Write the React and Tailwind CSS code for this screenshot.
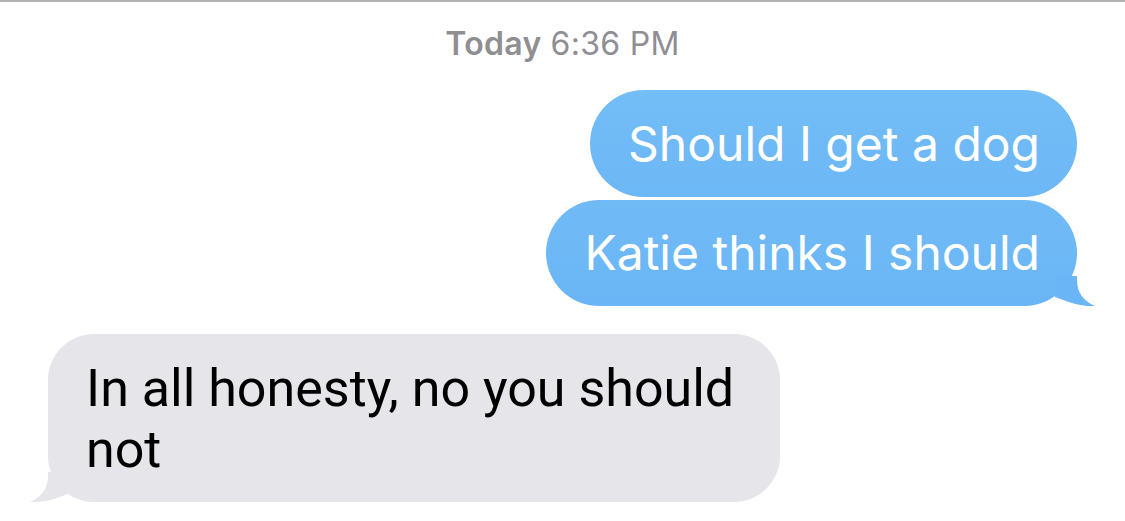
import React from 'react';

// iMessage-style conversation
function BlueTail() {
  return (
    <svg className="absolute right-[-18px] bottom-0" width="40" height="30" viewBox="0 0 40 30">
      <path d="M0 0 H22 V4 C22 16 28 25 40 30 C30 31 18 28 0 21 Z" fill="#6ab5f5" />
    </svg>
  );
}

function GrayTail() {
  return (
    <svg className="absolute left-[-18px] bottom-0" width="44" height="30" viewBox="0 0 44 30">
      <path d="M44 0 H18 V4 C18 16 12 25 0 30 C10 31 24 28 40 21 L44 21 Z" fill="#e5e5ea" />
    </svg>
  );
}

export default function App() {
  return (
    <div className="w-[1125px] h-[521px] bg-white border-t-2 border-[#b2b2b2] overflow-hidden" style={{ fontFamily: 'Inter, Roboto, sans-serif' }}>
      <div className="flex justify-center pt-[22px] text-[32px] leading-[40px] text-[#8e8e93] tracking-[0.3px]">
        <span className="font-semibold">Today</span>
        <span className="ml-[9px]">6:36 PM</span>
      </div>

      <div className="flex flex-col items-end pr-[48px] mt-[26px] gap-[3px]">
        <div className="h-[107px] rounded-[54px] bg-gradient-to-b from-[#73bef7] to-[#6cb7f5] text-white text-[48px] flex items-center pl-[38px] pr-[37px]">
          Should I get a dog
        </div>
        <div className="relative h-[106px] rounded-[53px] bg-gradient-to-b from-[#70bbf6] to-[#6ab5f5] text-white text-[48px] flex items-center pl-[38px] pr-[37px]">
          <span className="relative z-10">Katie thinks I should</span>
          <BlueTail />
        </div>
      </div>

      <div className="flex pl-[48px] mt-[28px]">
        <div className="relative w-[732px] h-[168px] rounded-[46px] bg-[#e5e5ea] text-black text-[52px] leading-[61px] pl-[38px] pr-[30px] pt-[24px] font-['Roboto',sans-serif]">
          <span className="relative z-10">In all honesty, no you should not</span>
          <GrayTail />
        </div>
      </div>
    </div>
  );
}
